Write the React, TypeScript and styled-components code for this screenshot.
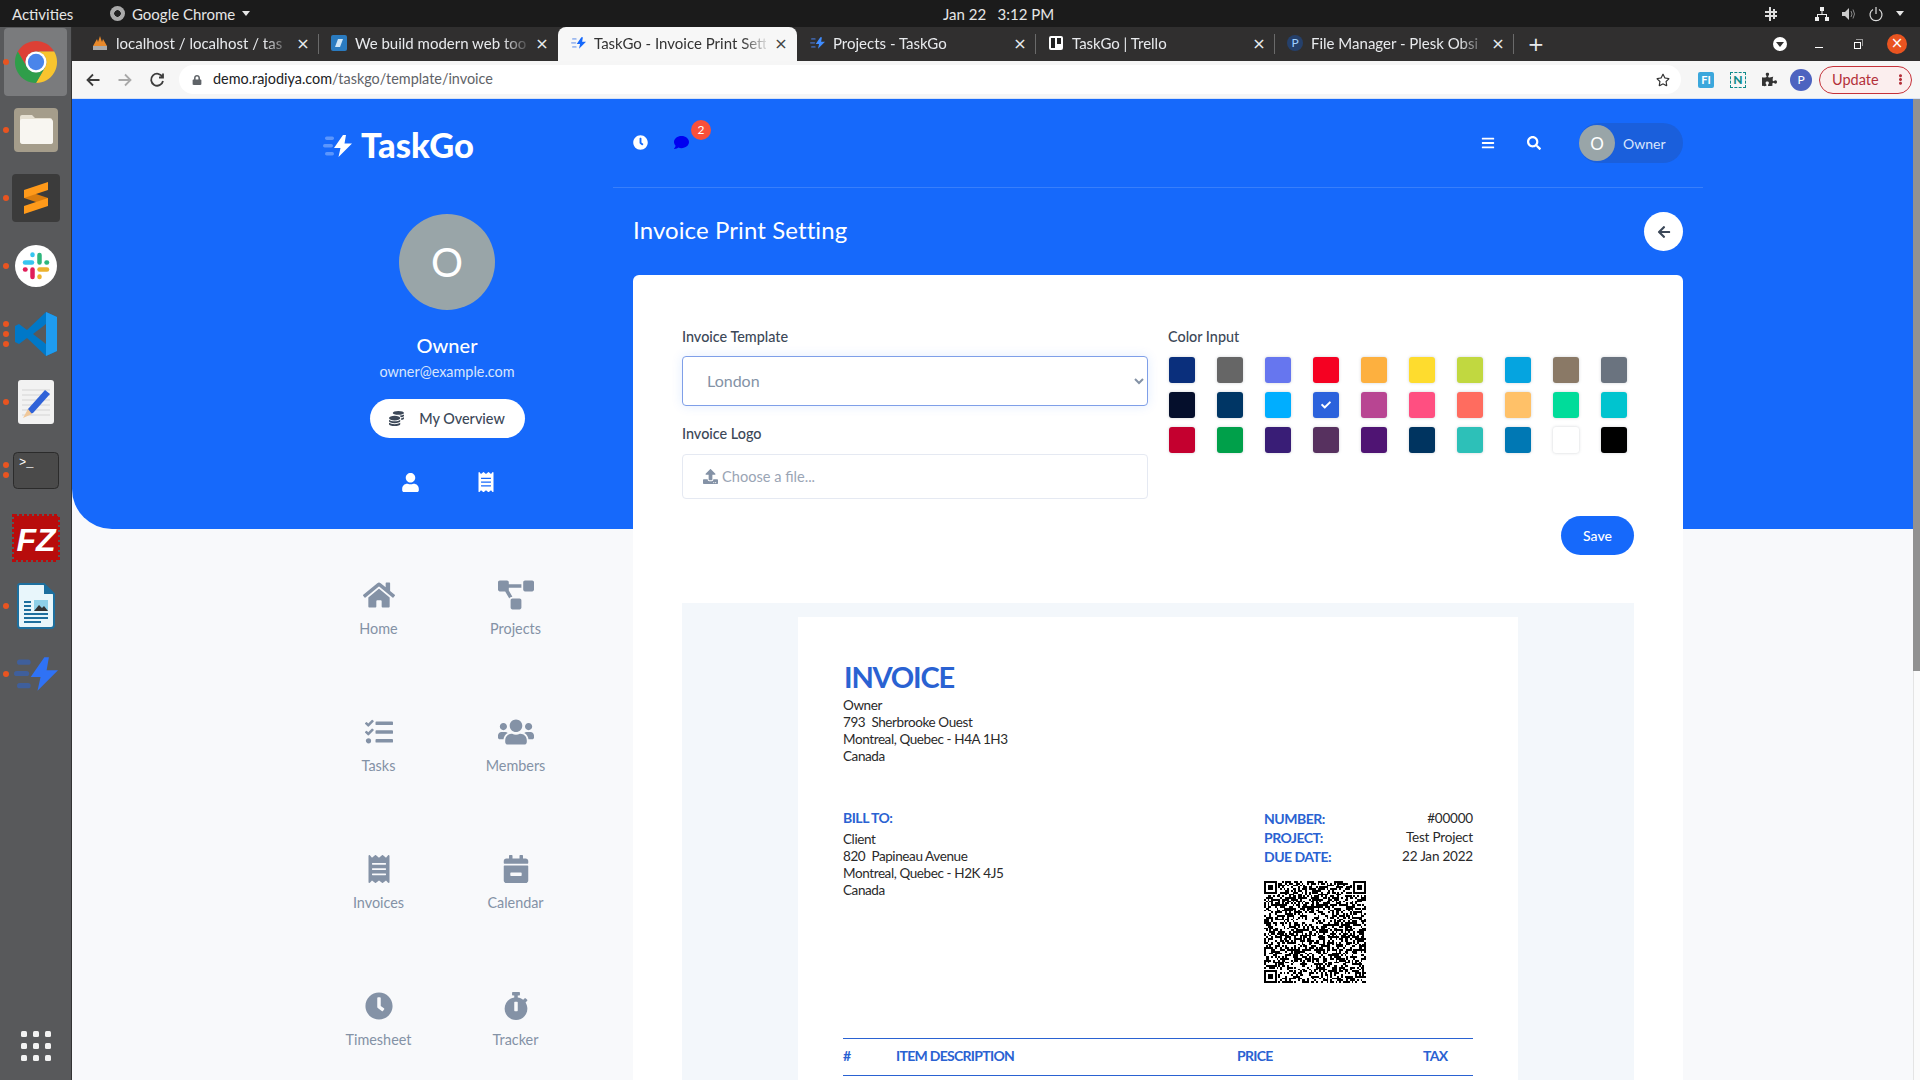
import React from "react";
import styled, { createGlobalStyle } from "styled-components";
import {
  FaArrowLeft,
  FaBars,
  FaCalendarMinus,
  FaCheck,
  FaClock,
  FaCoins,
  FaComment,
  FaEllipsisV,
  FaHome,
  FaProjectDiagram,
  FaPuzzlePiece,
  FaReceipt,
  FaRegStar,
  FaSearch,
  FaStopwatch,
  FaTasks,
  FaUpload,
  FaUser,
  FaUsers,
  FaLock,
} from "react-icons/fa";

const blue = "#1669fb";
const invoiceBlue = "#2a62d2";
const muted = "#8492a6";
const dark = "#3c4858";
const appFont = `Lato, "Noto Sans", sans-serif`;

const swatches = [
  "#0a2f7c", "#666666", "#6676ef", "#f50122", "#fdb03f", "#fedc2e", "#c1d840", "#05a4e0", "#8a7966", "#6a737f",
  "#050f2c", "#003665", "#00aeff", "#2b62dc", "#b84592", "#ff4f81", "#ff6c5f", "#ffc168", "#00dc9a", "#00c4cf",
  "#c4002f", "#00a04a", "#391d76", "#57315f", "#4f1473", "#003460", "#2dc0b8", "#0078b4", "#ffffff", "#000000",
];

const navItems = [
  { label: "Home", icon: FaHome, size: 32 },
  { label: "Projects", icon: FaProjectDiagram, size: 36 },
  { label: "Tasks", icon: FaTasks, size: 28 },
  { label: "Members", icon: FaUsers, size: 36 },
  { label: "Invoices", icon: FaReceipt, size: 28 },
  { label: "Calendar", icon: FaCalendarMinus, size: 28 },
  { label: "Timesheet", icon: FaClock, size: 28 },
  { label: "Tracker", icon: FaStopwatch, size: 28 },
];

// made-up QR pattern, only has to look right
const qrSize = 57;
const inFinder = (x: number, y: number) =>
  (x < 8 && y < 8) || (x >= qrSize - 8 && y < 8) || (x < 8 && y >= qrSize - 8);

function buildQr() {
  let seed = 4711;
  let d = "";
  for (let y = 0; y < qrSize; y++) {
    for (let x = 0; x < qrSize; x++) {
      seed = (seed * 1103515245 + 12345) & 0x7fffffff;
      if (!inFinder(x, y) && (seed >> 16) % 100 < 52) d += `M${x} ${y}h1v1h-1z`;
    }
  }
  return d;
}
const qrPath = buildQr();

function Finder({ x, y }: { x: number; y: number }) {
  return (
    <g transform={`translate(${x} ${y})`}>
      <path d="M0 0h7v7h-7zM1 1v5h5v-5z" fillRule="evenodd" />
      <rect x="2" y="2" width="3" height="3" />
    </g>
  );
}

function QrCode() {
  return (
    <QrSvg viewBox={`0 0 ${qrSize} ${qrSize}`} shapeRendering="crispEdges">
      <path d={qrPath} />
      <Finder x={0} y={0} />
      <Finder x={qrSize - 7} y={0} />
      <Finder x={0} y={qrSize - 7} />
    </QrSvg>
  );
}

function BoltMark({ width, height, bars, bolt }: { width: number; height: number; bars: string; bolt: string }) {
  return (
    <svg width={width} height={height} viewBox="0 0 29 22">
      <rect x="2" y="1.5" width="9" height="3.4" rx="1.7" fill={bars} />
      <rect x="0" y="9" width="10" height="3.4" rx="1.7" fill={bars} />
      <rect x="2" y="17" width="9" height="3.4" rx="1.7" fill={bars} />
      <path d="M20 0L11 13h6.5L15.5 22 29 8.5h-7.5L23 0z" fill={bolt} />
    </svg>
  );
}

const dockIcons = [
  { dots: 1, active: true, icon: (
    <svg width="46" height="46" viewBox="0 0 48 48">
      <path d="M5 13A22 22 0 0 1 43 13H24a11 11 0 0 0-9.5 16.5z" fill="#dd4035" />
      <path d="M43 13a22 22 0 0 1-19 33l9.5-16.5A11 11 0 0 0 24 13z" fill="#f8c42e" />
      <path d="M24 46A22 22 0 0 1 5 13l9.5 16.5a11 11 0 0 0 19 0z" fill="#2f9e4a" />
      <circle cx="24" cy="24" r="11" fill="#fff" />
      <circle cx="24" cy="24" r="8.5" fill="#4a85ea" />
    </svg>
  ) },
  { dots: 1, icon: (
    <svg width="44" height="44" viewBox="0 0 44 44">
      <rect width="44" height="44" rx="4" fill="#a59d8b" />
      <path d="M6 9q0-2 2-2h10l3 3h15q2 0 2 2v21q0 3-3 3H9q-3 0-3-3z" fill="#e6e0d2" />
      <path d="M6 13q0-2 2-2h28q3 0 3 3v20q0 2-3 2H9q-3 0-3-3z" fill="#f8f6f1" />
    </svg>
  ) },
  { dots: 1, icon: (
    <svg width="48" height="48" viewBox="0 0 48 48">
      <rect width="48" height="48" rx="4" fill="#3b3b3b" />
      <path d="M12 16l24 8v8l-24-8z" fill="#d97c0e" />
      <path d="M36 8L12 16v8l24-8z" fill="#ff9a1a" />
      <path d="M36 24v8l-24 8v-8z" fill="#ff9a1a" />
    </svg>
  ) },
  { dots: 1, icon: (
    <svg width="42" height="42" viewBox="0 0 42 42">
      <circle cx="21" cy="21" r="21" fill="#fff" />
      <g strokeWidth="4.5" strokeLinecap="round">
        <path d="M10 17.5h7" stroke="#36c5f0" />
        <path d="M17.5 9.5v.5" stroke="#36c5f0" />
        <path d="M24.5 10v7.5" stroke="#2eb67d" />
        <path d="M32 17.5h-.5" stroke="#2eb67d" />
        <path d="M32 24.5h-7.5" stroke="#ecb22e" />
        <path d="M24.5 32v-.5" stroke="#ecb22e" />
        <path d="M17.5 32v-7.5" stroke="#e01e5a" />
        <path d="M10 24.5h.5" stroke="#e01e5a" />
      </g>
    </svg>
  ) },
  { dots: 3, icon: (
    <svg width="42" height="44" viewBox="0 0 42 44">
      <path d="M31 0l11 5v34l-11 5-19-18-8 6-4-2V14l4-2 8 6z" fill="#0078c8" />
      <path d="M31 0l11 5v34l-11 5z" fill="#1f9cf0" />
      <path d="M31 12L18 22l13 10z" fill="#58595b" />
    </svg>
  ) },
  { dots: 1, icon: (
    <svg width="36" height="44" viewBox="0 0 36 44">
      <rect width="36" height="44" rx="3" fill="#f2f2f2" />
      <path d="M4 10h28M4 15h28M4 20h28M4 25h28M4 30h28M4 35h28" stroke="#d4d4d4" />
      <path d="M27 10l5 4-17 19-6 2 1-6z" fill="#2f62d8" />
      <path d="M10 29l-5 9 9-4z" fill="#f0c89a" />
    </svg>
  ) },
  { dots: 2, icon: (
    <svg width="46" height="37" viewBox="0 0 46 37">
      <rect x="0.5" y="0.5" width="45" height="36" rx="4" fill="#4a4a4a" stroke="#2b2b2b" />
      <text x="6" y="14" fontFamily="Liberation Mono, monospace" fontSize="12" fill="#fff">{">_"}</text>
    </svg>
  ) },
  { dots: 0, icon: (
    <svg width="48" height="48" viewBox="0 0 48 48">
      <rect x="2" y="2" width="44" height="44" fill="#b80c0c" stroke="#b80c0c" strokeWidth="4" strokeDasharray="3 2" />
      <text x="24" y="37" textAnchor="middle" fontFamily="Liberation Sans, sans-serif" fontStyle="italic" fontWeight="700" fontSize="32" fill="#fff">FZ</text>
    </svg>
  ) },
  { dots: 1, icon: (
    <svg width="38" height="46" viewBox="0 0 38 46">
      <path d="M3 1h24l10 10v31q0 3-3 3H3q-2 0-2-3V3q0-2 2-2z" fill="#e8f6fb" stroke="#1d6f9e" strokeWidth="2" />
      <path d="M27 1l10 10H27z" fill="#1d6f9e" />
      <path d="M7 18h7v2H7zM7 22h7v2H7zM7 26h7v2H7zM7 30h24v2H7zM7 34h24v2H7zM7 38h17v2H7z" fill="#1d6f9e" />
      <rect x="17" y="17" width="14" height="11" fill="#8ed0e8" />
      <path d="M17 28l5-6 3 3 2-2 4 5z" fill="#333" />
    </svg>
  ) },
  { dots: 1, icon: <BoltMark width={44} height={34} bars="#3f5f9c" bolt="#2f72f5" /> },
];

export default function App() {
  return (
    <Screen>
      <GlobalStyle />
      <TopBar>
        <Activities>Activities</Activities>
        <AppMenu>
          <ChromeDot />
          Google Chrome
          <Caret />
        </AppMenu>
        <Clock>Jan 22&nbsp;&nbsp; 3:12 PM</Clock>
        <Tray>
          <svg width="14" height="16" viewBox="0 0 14 16" fill="#ddd">
            <path d="M5 1h2v14H5zM9 3h2v10H9zM1 5h12v2H1zM1 9h12v2H1z" />
          </svg>
          <svg width="16" height="16" viewBox="0 0 16 16" fill="#eee">
            <path d="M6 1h4v4H6zM1 11h4v4H1zM11 11h4v4h-4zM7.5 5h1v3H13v3h-1V9H4v2H3V8h4.5z" />
          </svg>
          <svg width="14" height="14" viewBox="0 0 14 14" fill="#ccc">
            <path d="M0 5h3l4-4v12l-4-4H0z" />
            <path d="M9 4q2 3 0 6M11 2.5q3 4.5 0 9" stroke="#888" fill="none" />
          </svg>
          <svg width="16" height="16" viewBox="0 0 16 16" fill="none" stroke="#ddd" strokeWidth="1.2">
            <path d="M5 3.5a6 6 0 1 0 6 0M8 1v7" />
          </svg>
          <Caret />
        </Tray>
      </TopBar>
      <Desktop>
        <Dock>
          {dockIcons.map((item, i) => (
            <DockItem key={i} $active={item.active}>
              <DockDots>
                {Array.from({ length: item.dots }).map((_, d) => (
                  <DockDot key={d} />
                ))}
              </DockDots>
              {item.icon}
            </DockItem>
          ))}
          <DockGrid>
            {Array.from({ length: 9 }).map((_, i) => (
              <DockGridDot key={i} />
            ))}
          </DockGrid>
        </Dock>
        <Browser>
          <TabStrip>
            <Tab $sep>
              <Favicon>
                <svg width="16" height="16" viewBox="0 0 16 16">
                  <path d="M1 11L5 4l1 3 2-6 2 6 1-3 4 7z" fill="#e8892b" />
                  <rect x="1" y="11" width="14" height="4" fill="#aaa" />
                </svg>
              </Favicon>
              <TabTitle>localhost / localhost / tas</TabTitle>
              <TabClose>×</TabClose>
            </Tab>
            <Tab>
              <Favicon>
                <svg width="16" height="16" viewBox="0 0 16 16">
                  <rect width="16" height="16" rx="2" fill="#2a7bc0" />
                  <path d="M4 12L7 4h5L9 12z" fill="#cfe6f7" />
                </svg>
              </Favicon>
              <TabTitle>We build modern web too</TabTitle>
              <TabClose>×</TabClose>
            </Tab>
            <Tab $active>
              <Favicon>
                <BoltMark width={15} height={12} bars="#9db9ef" bolt={blue} />
              </Favicon>
              <TabTitle $active>TaskGo - Invoice Print Sett</TabTitle>
              <TabClose $active>×</TabClose>
            </Tab>
            <Tab $sep>
              <Favicon>
                <BoltMark width={15} height={12} bars="#3f5f9c" bolt="#3f8cff" />
              </Favicon>
              <TabTitle>Projects - TaskGo</TabTitle>
              <TabClose>×</TabClose>
            </Tab>
            <Tab $sep>
              <Favicon>
                <svg width="14" height="14" viewBox="0 0 14 14">
                  <rect width="14" height="14" rx="2" fill="#fff" />
                  <rect x="2" y="2" width="4" height="10" fill="#222" />
                  <rect x="8" y="2" width="4" height="6" fill="#222" />
                </svg>
              </Favicon>
              <TabTitle>TaskGo | Trello</TabTitle>
              <TabClose>×</TabClose>
            </Tab>
            <Tab $sep>
              <Favicon>
                <svg width="16" height="16" viewBox="0 0 16 16">
                  <circle cx="8" cy="8" r="8" fill="#25406b" />
                  <text x="8" y="12" textAnchor="middle" fontFamily="Lato, sans-serif" fontSize="12" fill="#9fd0ff">P</text>
                </svg>
              </Favicon>
              <TabTitle>File Manager - Plesk Obsi</TabTitle>
              <TabClose>×</TabClose>
            </Tab>
            <NewTab>+</NewTab>
            <WindowControls>
              <TabSearch />
              <MinimizeMark />
              <RestoreMark />
              <CloseMark>×</CloseMark>
            </WindowControls>
          </TabStrip>
          <Toolbar>
            <NavArrow viewBox="0 0 16 16">
              <path d="M14.5 8H2.5M8 2.5L2.5 8 8 13.5" />
            </NavArrow>
            <NavArrow viewBox="0 0 16 16" $off>
              <path d="M1.5 8h12M8 2.5L13.5 8 8 13.5" />
            </NavArrow>
            <NavArrow viewBox="0 0 16 16">
              <path d="M13.5 5A6 6 0 1 0 14 9M14 1.5V5.5H10" />
            </NavArrow>
            <AddressPill>
              <FaLock size={10} color="#5f6368" />
              <Url>
                demo.rajodiya.com<UrlPath>/taskgo/template/invoice</UrlPath>
              </Url>
              <StarSlot>
                <FaRegStar size={14} color="#333" />
              </StarSlot>
            </AddressPill>
            <Extensions>
              <ExtensionF>FI</ExtensionF>
              <ExtensionN>N</ExtensionN>
              <FaPuzzlePiece size={15} color="#333" />
              <ProfileBubble>P</ProfileBubble>
              <UpdateButton>
                Update
                <FaEllipsisV size={11} />
              </UpdateButton>
            </Extensions>
          </Toolbar>
          <Viewport>
            <ScrollArea>
              <Sidebar>
                <Logo>
                  <BoltMark width={29} height={22} bars="rgba(255,255,255,.3)" bolt="#fff" />
                  <LogoText>TaskGo</LogoText>
                </Logo>
                <BigAvatar>O</BigAvatar>
                <ProfileName>Owner</ProfileName>
                <ProfileMail>owner@example.com</ProfileMail>
                <OverviewButton>
                  <FaCoins size={15} />
                  My Overview
                </OverviewButton>
                <ProfileLinks>
                  <FaUser size={19} />
                  <FaReceipt size={20} />
                </ProfileLinks>
                <NavGrid>
                  {navItems.map(({ label, icon: Icon, size }) => (
                    <NavCell key={label}>
                      <NavIcon>
                        <Icon size={size} />
                      </NavIcon>
                      {label}
                    </NavCell>
                  ))}
                </NavGrid>
              </Sidebar>
              <Main>
                <Header>
                  <HeaderGroup>
                    <FaClock size={15} color="#fff" />
                    <ChatIcon>
                      <FaComment size={15} color="#0000f0" />
                      <Badge>2</Badge>
                    </ChatIcon>
                  </HeaderGroup>
                  <HeaderRight>
                    <FaBars size={14} color="#fff" />
                    <FaSearch size={14} color="#fff" />
                    <UserPill>
                      <SmallAvatar>O</SmallAvatar>
                      Owner
                    </UserPill>
                  </HeaderRight>
                </Header>
                <TitleRow>
                  <PageTitle>Invoice Print Setting</PageTitle>
                  <BackButton>
                    <FaArrowLeft size={14} />
                  </BackButton>
                </TitleRow>
                <Card>
                  <FormRow>
                    <FormColumn>
                      <FieldLabel>Invoice Template</FieldLabel>
                      <TemplateSelect defaultValue="London">
                        <option>London</option>
                        <option>New York</option>
                        <option>Toronto</option>
                      </TemplateSelect>
                      <FieldLabel $spaced>Invoice Logo</FieldLabel>
                      <FileBox>
                        <FaUpload size={15} color={muted} />
                        Choose a file...
                      </FileBox>
                    </FormColumn>
                    <FormColumn>
                      <FieldLabel>Color Input</FieldLabel>
                      <SwatchGrid>
                        {swatches.map((color, i) => (
                          <Swatch key={i} $color={color}>
                            {i === 13 && <FaCheck size={10} color="#fff" />}
                          </Swatch>
                        ))}
                      </SwatchGrid>
                    </FormColumn>
                  </FormRow>
                  <SaveRow>
                    <SaveButton>Save</SaveButton>
                  </SaveRow>
                  <Preview>
                    <Paper>
                      <InvoiceHeading>INVOICE</InvoiceHeading>
                      <AddressBlock>
                        <div>Owner</div>
                        <div>793&nbsp; Sherbrooke Ouest</div>
                        <div>Montreal, Quebec - H4A 1H3</div>
                        <div>Canada</div>
                      </AddressBlock>
                      <InfoRow>
                        <div>
                          <BillTitle>BILL TO:</BillTitle>
                          <BillAddress>
                            <div>Client</div>
                            <div>820&nbsp; Papineau Avenue</div>
                            <div>Montreal, Quebec - H2K 4J5</div>
                            <div>Canada</div>
                          </BillAddress>
                        </div>
                        <MetaColumn>
                          <MetaRow>
                            <MetaKey>NUMBER:</MetaKey>
                            #00000
                          </MetaRow>
                          <MetaRow>
                            <MetaKey>PROJECT:</MetaKey>
                            Test Project
                          </MetaRow>
                          <MetaRow>
                            <MetaKey>DUE DATE:</MetaKey>
                            22 Jan 2022
                          </MetaRow>
                          <QrCode />
                        </MetaColumn>
                      </InfoRow>
                      <ItemsHead>
                        <span>#</span>
                        <span>ITEM DESCRIPTION</span>
                        <span>PRICE</span>
                        <span>TAX</span>
                      </ItemsHead>
                    </Paper>
                  </Preview>
                </Card>
              </Main>
            </ScrollArea>
            <Scrollbar>
              <ScrollThumb />
            </Scrollbar>
          </Viewport>
        </Browser>
      </Desktop>
    </Screen>
  );
}

const GlobalStyle = createGlobalStyle`
  html, body {
    margin: 0;
    padding: 0;
    overflow: hidden;
    background: #1b1b1b;
  }
  * {
    box-sizing: border-box;
  }
`;

const Screen = styled.div`
  width: 1920px;
  height: 1080px;
  display: flex;
  flex-direction: column;
  overflow: hidden;
  font-family: ${appFont};
`;

const TopBar = styled.div`
  height: 27px;
  flex: none;
  background: #1b1b1b;
  color: #e6e6e6;
  font-size: 15px;
  display: flex;
  align-items: center;
  padding-left: 12px;
  position: relative;
`;

const Activities = styled.div`
  width: 98px;
`;

const AppMenu = styled.div`
  display: flex;
  align-items: center;
  gap: 7px;
`;

const ChromeDot = styled.div`
  width: 15px;
  height: 15px;
  border-radius: 50%;
  background: radial-gradient(circle, #222 0 3px, #aaa 3.5px);
`;

const Caret = styled.div`
  width: 0;
  height: 0;
  border-left: 4px solid transparent;
  border-right: 4px solid transparent;
  border-top: 5px solid #e6e6e6;
`;

const Clock = styled.div`
  position: absolute;
  left: 943px;
`;

const Tray = styled.div`
  margin-left: auto;
  padding-right: 16px;
  display: flex;
  align-items: center;
  gap: 12px;
  & > svg:first-child {
    margin-right: 24px;
  }
`;

const Desktop = styled.div`
  flex: 1;
  display: flex;
  min-height: 0;
`;

const Dock = styled.div`
  width: 72px;
  flex: none;
  background: #58595b;
  border-right: 1px solid #333;
  display: flex;
  flex-direction: column;
  align-items: center;
  padding-top: 1px;
`;

const DockItem = styled.div<{ $active?: boolean }>`
  width: 63px;
  height: 68px;
  flex: none;
  border-radius: 4px;
  display: flex;
  align-items: center;
  justify-content: center;
  position: relative;
  background: ${(p) => (p.$active ? "#7a7b7d" : "transparent")};
`;

const DockDots = styled.div`
  position: absolute;
  left: -1px;
  top: 0;
  bottom: 0;
  display: flex;
  flex-direction: column;
  justify-content: center;
  gap: 4px;
`;

const DockDot = styled.div`
  width: 6px;
  height: 6px;
  border-radius: 50%;
  background: #e95420;
`;

const DockGrid = styled.div`
  margin-top: 323px;
  width: 30px;
  display: grid;
  grid-template-columns: repeat(3, 6px);
  justify-content: space-between;
  row-gap: 6px;
`;

const DockGridDot = styled.div`
  width: 6px;
  height: 6px;
  border-radius: 1.5px;
  background: #f2f2f2;
`;

const Browser = styled.div`
  flex: 1;
  min-width: 0;
  display: flex;
  flex-direction: column;
`;

const TabStrip = styled.div`
  height: 34px;
  flex: none;
  background: #302f2f;
  display: flex;
  align-items: stretch;
  padding-left: 8px;
  padding-right: 13px;
  color: #e8eaed;
`;

const Tab = styled.div<{ $active?: boolean; $sep?: boolean }>`
  width: 239px;
  flex: none;
  display: flex;
  align-items: center;
  padding: 0 9px 2px 12px;
  gap: 8px;
  position: relative;
  border-radius: ${(p) => (p.$active ? "8px 8px 0 0" : "0")};
  background: ${(p) => (p.$active ? "#f7f7f7" : "transparent")};
  &::after {
    content: "";
    display: ${(p) => (p.$sep ? "block" : "none")};
    position: absolute;
    right: 0;
    top: 7px;
    bottom: 7px;
    width: 1px;
    background: #6a6a6a;
  }
`;

const Favicon = styled.div`
  width: 16px;
  height: 16px;
  flex: none;
  display: flex;
  align-items: center;
  justify-content: center;
`;

const TabTitle = styled.div<{ $active?: boolean }>`
  flex: 1;
  min-width: 0;
  font-size: 15px;
  white-space: nowrap;
  overflow: hidden;
  color: ${(p) => (p.$active ? "#333" : "#e8eaed")};
  mask-image: linear-gradient(to right, #000 86%, rgba(0, 0, 0, 0.15) 100%);
`;

const TabClose = styled.div<{ $active?: boolean }>`
  width: 14px;
  flex: none;
  font-family: "DejaVu Sans", sans-serif;
  font-size: 16px;
  text-align: center;
  color: ${(p) => (p.$active ? "#444" : "#e8eaed")};
`;

const NewTab = styled.div`
  width: 44px;
  display: flex;
  align-items: center;
  justify-content: center;
  font-family: "DejaVu Sans", sans-serif;
  font-size: 20px;
`;

const WindowControls = styled.div`
  margin-left: auto;
  display: flex;
  align-items: center;
`;

const TabSearch = styled.div`
  width: 14px;
  height: 14px;
  border-radius: 50%;
  background: #fff;
  position: relative;
  &::after {
    content: "";
    position: absolute;
    left: 3px;
    top: 5px;
    border-left: 4px solid transparent;
    border-right: 4px solid transparent;
    border-top: 5px solid #302f2f;
  }
`;

const MinimizeMark = styled.div`
  width: 8px;
  height: 1px;
  background: #fff;
  margin: 6px 0 0 28px;
`;

const RestoreMark = styled.div`
  width: 7px;
  height: 7px;
  border: 1px solid #fff;
  margin: 2px 0 0 31px;
  position: relative;
  &::before {
    content: "";
    position: absolute;
    left: 1px;
    top: -4px;
    width: 6px;
    height: 6px;
    border-top: 1px solid #999;
    border-right: 1px solid #999;
  }
`;

const CloseMark = styled.div`
  width: 20px;
  height: 20px;
  border-radius: 50%;
  background: #e95420;
  color: #fff;
  margin-left: 26px;
  font-family: "DejaVu Sans", sans-serif;
  font-size: 15px;
  line-height: 19px;
  text-align: center;
`;

const Toolbar = styled.div`
  height: 38px;
  flex: none;
  background: #f6f6f6;
  border-bottom: 1px solid #d7e2f5;
  display: flex;
  align-items: center;
  padding: 0 8px 0 13px;
`;

const NavArrow = styled.svg<{ $off?: boolean }>`
  width: 16px;
  height: 16px;
  margin-right: 16px;
  fill: none;
  stroke: ${(p) => (p.$off ? "#a9a9a9" : "#3c3c3c")};
  stroke-width: 1.8;
  flex: none;
`;

const AddressPill = styled.div`
  width: 1502px;
  height: 29px;
  margin-left: -2px;
  border-radius: 15px;
  background: #fff;
  display: flex;
  align-items: center;
  padding: 0 9px 0 13px;
`;

const Url = styled.div`
  margin-left: 11px;
  margin-top: -2px;
  font-size: 14.4px;
  color: #202124;
`;

const UrlPath = styled.span`
  color: #5f6368;
`;

const StarSlot = styled.div`
  margin-left: auto;
  margin-right: 2px;
  display: flex;
`;

const Extensions = styled.div`
  flex: 1;
  display: flex;
  align-items: center;
  justify-content: flex-end;
  gap: 16px;
`;

const ExtensionF = styled.div`
  width: 16px;
  height: 16px;
  border-radius: 2px;
  background: #3ba7dc;
  color: #fff;
  font-size: 11px;
  font-weight: 700;
  line-height: 16px;
  text-align: center;
`;

const ExtensionN = styled.div`
  width: 16px;
  height: 16px;
  border: 1px dashed #0f8a8a;
  color: #0f8a8a;
  font-size: 12px;
  font-weight: 900;
  line-height: 14px;
  text-align: center;
`;

const ProfileBubble = styled.div`
  width: 22px;
  height: 22px;
  margin-left: -3px;
  border-radius: 50%;
  background: #4d63c0;
  color: #fff;
  font-size: 12px;
  line-height: 21px;
  text-align: center;
`;

const UpdateButton = styled.div`
  width: 93px;
  height: 28px;
  margin-left: -9px;
  border: 1px solid #c5323a;
  border-radius: 14px;
  color: #b3303a;
  background: #fbeeee;
  font-size: 14.5px;
  display: flex;
  align-items: center;
  justify-content: space-between;
  padding: 0 5px 0 12px;
`;

const Viewport = styled.div`
  flex: 1;
  min-height: 0;
  display: flex;
`;

const ScrollArea = styled.div`
  flex: 1;
  min-width: 0;
  position: relative;
  overflow: hidden;
  display: flex;
  align-items: flex-start;
  background: #f8f9fb;
  padding-left: 238px;
  &::before {
    content: "";
    position: absolute;
    left: 0;
    right: 0;
    top: 0;
    height: 430px;
    background: ${blue};
    border-bottom-left-radius: 40px;
  }
`;

const Scrollbar = styled.div`
  width: 7px;
  flex: none;
  background: #fbfbfb;
  border-left: 1px solid #e4e4e4;
`;

const ScrollThumb = styled.div`
  width: 7px;
  margin-left: -1px;
  height: 572px;
  background: #919191;
`;

const Sidebar = styled.div`
  width: 274px;
  flex: none;
  position: relative;
  display: flex;
  flex-direction: column;
  align-items: center;
  padding-top: 27px;
  color: #fff;
`;

const Logo = styled.div`
  align-self: flex-start;
  margin-left: 13px;
  height: 40px;
  display: flex;
  align-items: center;
  gap: 9px;
`;

const LogoText = styled.div`
  margin-top: -3px;
  font-size: 34.5px;
  font-weight: 900;
`;

const BigAvatar = styled.div`
  width: 96px;
  height: 96px;
  margin-top: 48px;
  border-radius: 50%;
  background: #99a5a8;
  color: #fff;
  font-size: 40px;
  display: flex;
  align-items: center;
  justify-content: center;
`;

const ProfileName = styled.div`
  margin-top: 21px;
  font-size: 20px;
  line-height: 28px;
  font-weight: 500;
`;

const ProfileMail = styled.div`
  margin-top: 3px;
  font-size: 14.4px;
  line-height: 20px;
  color: #d8e5fd;
`;

const OverviewButton = styled.div`
  margin-top: 17px;
  width: 155px;
  height: 39px;
  border-radius: 20px;
  background: #fff;
  color: ${dark};
  font-size: 14.4px;
  font-weight: 500;
  display: flex;
  align-items: center;
  justify-content: center;
  gap: 15px;
`;

const ProfileLinks = styled.div`
  margin-top: 34px;
  margin-left: 3px;
  width: 95px;
  height: 20px;
  display: flex;
  align-items: center;
  justify-content: space-between;
`;

const NavGrid = styled.div`
  margin-top: 67px;
  display: grid;
  grid-template-columns: repeat(2, 137px);
  grid-auto-rows: 137px;
`;

const NavCell = styled.div`
  padding-top: 22px;
  display: flex;
  flex-direction: column;
  align-items: center;
  color: ${muted};
  font-size: 14.4px;
  line-height: 20px;
`;

const NavIcon = styled.div`
  height: 28px;
  margin-bottom: 10px;
  display: flex;
  align-items: center;
`;

const Main = styled.div`
  width: 1090px;
  flex: none;
  margin-left: 29px;
  position: relative;
  padding-top: 24px;
`;

const Header = styled.div`
  height: 65px;
  padding: 0 20px 24px;
  border-bottom: 1px solid rgba(255, 255, 255, 0.15);
  display: flex;
  align-items: center;
  justify-content: space-between;
`;

const HeaderGroup = styled.div`
  display: flex;
  align-items: center;
  gap: 26px;
  margin-top: -2px;
`;

const ChatIcon = styled.div`
  position: relative;
  display: flex;
`;

const Badge = styled.div`
  position: absolute;
  left: 17px;
  top: -15px;
  width: 20px;
  height: 20px;
  border-radius: 50%;
  background: #f9503a;
  color: #fff;
  font-size: 12px;
  line-height: 20px;
  text-align: center;
`;

const HeaderRight = styled.div`
  display: flex;
  align-items: center;
  gap: 32px;
`;

const UserPill = styled.div`
  width: 104px;
  height: 40px;
  margin-left: 6px;
  border-radius: 20px;
  background: #1a5fdc;
  color: #d8e5fd;
  font-size: 14px;
  display: flex;
  align-items: center;
  gap: 8px;
`;

const SmallAvatar = styled.div`
  width: 36px;
  height: 36px;
  border-radius: 50%;
  background: #99a5a8;
  color: #fff;
  font-size: 17px;
  display: flex;
  align-items: center;
  justify-content: center;
`;

const TitleRow = styled.div`
  margin-top: 24px;
  height: 39px;
  padding: 0 20px;
  display: flex;
  align-items: center;
  justify-content: space-between;
`;

const PageTitle = styled.div`
  font-size: 24px;
  letter-spacing: 0.1px;
  padding-bottom: 5px;
  color: #fff;
`;

const BackButton = styled.div`
  width: 39px;
  height: 39px;
  border-radius: 50%;
  background: #fff;
  color: ${dark};
  display: flex;
  align-items: center;
  justify-content: center;
`;

const Card = styled.div`
  margin: 24px 20px 0;
  padding: 52px 49px 0;
  background: #fff;
  border-radius: 6px 6px 0 0;
  min-height: 900px;
`;

const FormRow = styled.div`
  display: grid;
  grid-template-columns: 466px 466px;
  column-gap: 20px;
`;

const FormColumn = styled.div`
  min-width: 0;
`;

const FieldLabel = styled.div<{ $spaced?: boolean }>`
  font-size: 14.4px;
  line-height: 20px;
  font-weight: 500;
  color: ${dark};
  margin-top: ${(p) => (p.$spaced ? "18px" : "0")};
`;

const TemplateSelect = styled.select`
  display: block;
  width: 100%;
  height: 50px;
  margin-top: 9px;
  padding: 0 0 2px 20px;
  border: 1px solid #7f9fe8;
  border-radius: 4px;
  background: #fff;
  color: ${muted};
  font-family: ${appFont};
  font-size: 16px;
  box-shadow: 0 0 12px rgba(22, 105, 251, 0.12);
  outline: none;
`;

const FileBox = styled.div`
  height: 45px;
  margin-top: 10px;
  padding-left: 20px;
  border: 1px solid #e5e9f2;
  border-radius: 4px;
  color: #9aa5b5;
  font-size: 14.6px;
  display: flex;
  align-items: center;
  gap: 4px;
`;

const SwatchGrid = styled.div`
  margin: 10px 0 0 1px;
  display: grid;
  grid-template-columns: repeat(10, 26px);
  grid-auto-rows: 26px;
  column-gap: 22px;
  row-gap: 9px;
`;

const Swatch = styled.div<{ $color: string }>`
  border-radius: 3px;
  background: ${(p) => p.$color};
  box-shadow: 0 0 3px rgba(60, 72, 88, 0.25);
  display: flex;
  align-items: center;
  justify-content: center;
`;

const SaveRow = styled.div`
  margin-top: 17px;
  display: flex;
  justify-content: flex-end;
`;

const SaveButton = styled.div`
  width: 73px;
  height: 39px;
  border-radius: 20px;
  background: ${blue};
  color: #fff;
  font-size: 14px;
  font-weight: 500;
  display: flex;
  align-items: center;
  justify-content: center;
`;

const Preview = styled.div`
  margin-top: 48px;
  padding: 14px 116px 0;
  background: #f3f7fb;
`;

const Paper = styled.div`
  background: #fff;
  padding: 42px 45px 40px;
  color: #2a2a2a;
  font-size: 13.5px;
`;

const InvoiceHeading = styled.div`
  padding-left: 1px;
  font-size: 29px;
  line-height: 36px;
  font-weight: 700;
  letter-spacing: -1.2px;
  color: ${invoiceBlue};
`;

const AddressBlock = styled.div`
  margin-top: 2px;
  line-height: 17px;
  letter-spacing: -0.4px;
`;

const InfoRow = styled.div`
  margin-top: 43px;
  display: flex;
  justify-content: space-between;
`;

const BillTitle = styled.div`
  line-height: 20px;
  font-size: 14px;
  font-weight: 700;
  letter-spacing: -0.5px;
  color: ${invoiceBlue};
`;

const BillAddress = styled.div`
  margin-top: 3px;
  line-height: 17px;
  letter-spacing: -0.4px;
`;

const MetaColumn = styled.div`
  width: 209px;
  margin-top: 1px;
`;

const MetaRow = styled.div`
  height: 19px;
  line-height: 19px;
  display: flex;
  justify-content: space-between;
  letter-spacing: -0.2px;
`;

const MetaKey = styled.span`
  font-size: 14px;
  font-weight: 700;
  letter-spacing: -0.5px;
  color: ${invoiceBlue};
`;

const QrSvg = styled.svg`
  display: block;
  width: 102px;
  height: 102px;
  margin-top: 15px;
`;

const ItemsHead = styled.div`
  margin-top: 55px;
  height: 38px;
  padding-bottom: 3px;
  border-top: 1px solid ${invoiceBlue};
  border-bottom: 1px solid ${invoiceBlue};
  display: grid;
  grid-template-columns: 53px 341px 186px 1fr;
  align-items: center;
  font-size: 14px;
  font-weight: 700;
  letter-spacing: -0.7px;
  color: ${invoiceBlue};
`;
